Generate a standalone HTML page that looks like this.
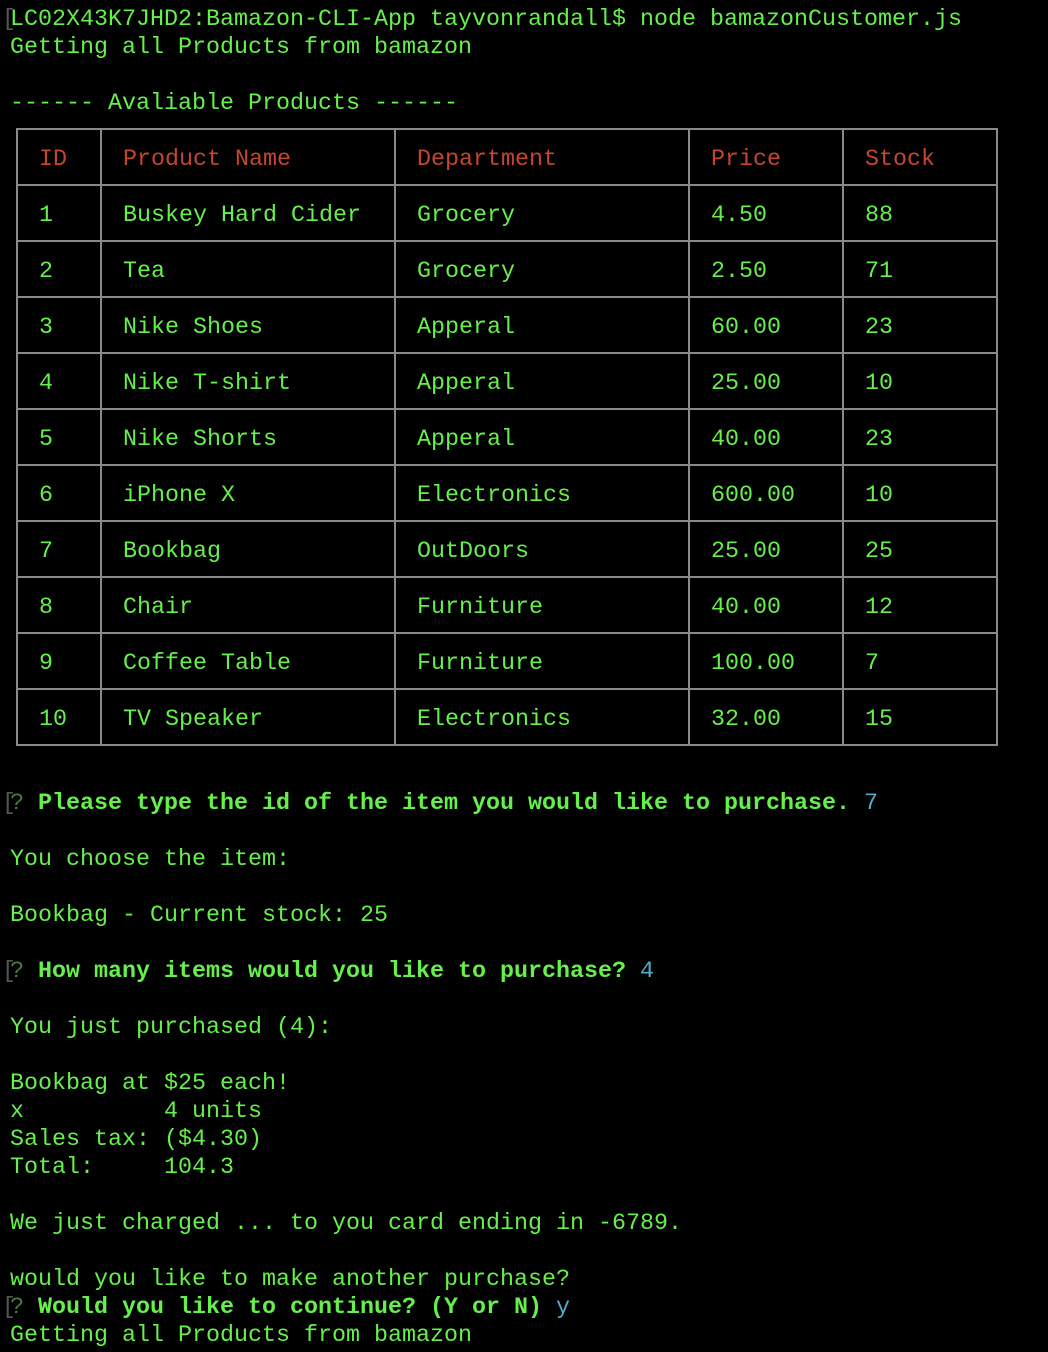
<!DOCTYPE html>
<html><head><meta charset="utf-8"><style>
html,body{margin:0;padding:0;background:#000;width:1048px;height:1352px;overflow:hidden;position:relative}
.l{position:absolute;left:10px;height:28px;line-height:28px;margin-top:2px;font-family:"Liberation Mono",monospace;font-size:23.33px;color:#66f04c;white-space:pre}
.b{font-weight:bold}
.q{color:#4a7a40;font-weight:normal}
.a{color:#55aacc;font-weight:normal}
.r{color:#c4462e}
.h{position:absolute;background:#8a8a8a;height:2px;left:16px;width:982px}
.v{position:absolute;background:#8a8a8a;width:2px;top:128px;height:618px}
.br{position:absolute;left:2px;height:28px;line-height:28px;margin-top:2px;font-family:"Liberation Mono",monospace;font-size:23.33px;color:#555}
</style></head><body>
<div class="br" style="top:4px">[</div>
<div class="l" style="top:4px">LC02X43K7JHD2:Bamazon-CLI-App tayvonrandall$ node bamazonCustomer.js</div>
<div class="l" style="top:32px">Getting all Products from bamazon</div>
<div class="l" style="top:88px">------ Avaliable Products ------</div>

<div class="h" style="top:128px"></div>
<div class="h" style="top:184px"></div>
<div class="h" style="top:240px"></div>
<div class="h" style="top:296px"></div>
<div class="h" style="top:352px"></div>
<div class="h" style="top:408px"></div>
<div class="h" style="top:464px"></div>
<div class="h" style="top:520px"></div>
<div class="h" style="top:576px"></div>
<div class="h" style="top:632px"></div>
<div class="h" style="top:688px"></div>
<div class="h" style="top:744px"></div>
<div class="v" style="left:16px"></div>
<div class="v" style="left:100px"></div>
<div class="v" style="left:394px"></div>
<div class="v" style="left:688px"></div>
<div class="v" style="left:842px"></div>
<div class="v" style="left:996px"></div>

<div class="l r" style="top:144px;left:39px">ID</div>
<div class="l r" style="top:144px;left:123px">Product Name</div>
<div class="l r" style="top:144px;left:417px">Department</div>
<div class="l r" style="top:144px;left:711px">Price</div>
<div class="l r" style="top:144px;left:865px">Stock</div>

<div class="l" style="top:200px;left:39px">1</div><div class="l" style="top:200px;left:123px">Buskey Hard Cider</div><div class="l" style="top:200px;left:417px">Grocery</div><div class="l" style="top:200px;left:711px">4.50</div><div class="l" style="top:200px;left:865px">88</div>
<div class="l" style="top:256px;left:39px">2</div><div class="l" style="top:256px;left:123px">Tea</div><div class="l" style="top:256px;left:417px">Grocery</div><div class="l" style="top:256px;left:711px">2.50</div><div class="l" style="top:256px;left:865px">71</div>
<div class="l" style="top:312px;left:39px">3</div><div class="l" style="top:312px;left:123px">Nike Shoes</div><div class="l" style="top:312px;left:417px">Apperal</div><div class="l" style="top:312px;left:711px">60.00</div><div class="l" style="top:312px;left:865px">23</div>
<div class="l" style="top:368px;left:39px">4</div><div class="l" style="top:368px;left:123px">Nike T-shirt</div><div class="l" style="top:368px;left:417px">Apperal</div><div class="l" style="top:368px;left:711px">25.00</div><div class="l" style="top:368px;left:865px">10</div>
<div class="l" style="top:424px;left:39px">5</div><div class="l" style="top:424px;left:123px">Nike Shorts</div><div class="l" style="top:424px;left:417px">Apperal</div><div class="l" style="top:424px;left:711px">40.00</div><div class="l" style="top:424px;left:865px">23</div>
<div class="l" style="top:480px;left:39px">6</div><div class="l" style="top:480px;left:123px">iPhone X</div><div class="l" style="top:480px;left:417px">Electronics</div><div class="l" style="top:480px;left:711px">600.00</div><div class="l" style="top:480px;left:865px">10</div>
<div class="l" style="top:536px;left:39px">7</div><div class="l" style="top:536px;left:123px">Bookbag</div><div class="l" style="top:536px;left:417px">OutDoors</div><div class="l" style="top:536px;left:711px">25.00</div><div class="l" style="top:536px;left:865px">25</div>
<div class="l" style="top:592px;left:39px">8</div><div class="l" style="top:592px;left:123px">Chair</div><div class="l" style="top:592px;left:417px">Furniture</div><div class="l" style="top:592px;left:711px">40.00</div><div class="l" style="top:592px;left:865px">12</div>
<div class="l" style="top:648px;left:39px">9</div><div class="l" style="top:648px;left:123px">Coffee Table</div><div class="l" style="top:648px;left:417px">Furniture</div><div class="l" style="top:648px;left:711px">100.00</div><div class="l" style="top:648px;left:865px">7</div>
<div class="l" style="top:704px;left:39px">10</div><div class="l" style="top:704px;left:123px">TV Speaker</div><div class="l" style="top:704px;left:417px">Electronics</div><div class="l" style="top:704px;left:711px">32.00</div><div class="l" style="top:704px;left:865px">15</div>

<div class="br" style="top:788px">[</div>
<div class="l b" style="top:788px"><span class="q">?</span> Please type the id of the item you would like to purchase. <span class="a">7</span></div>
<div class="l" style="top:844px">You choose the item:</div>
<div class="l" style="top:900px">Bookbag - Current stock: 25</div>
<div class="br" style="top:956px">[</div>
<div class="l b" style="top:956px"><span class="q">?</span> How many items would you like to purchase? <span class="a">4</span></div>
<div class="l" style="top:1012px">You just purchased (4):</div>
<div class="l" style="top:1068px">Bookbag at $25 each!</div>
<div class="l" style="top:1096px">x          4 units</div>
<div class="l" style="top:1124px">Sales tax: ($4.30)</div>
<div class="l" style="top:1152px">Total:     104.3</div>
<div class="l" style="top:1208px">We just charged ... to you card ending in -6789.</div>
<div class="l" style="top:1264px">would you like to make another purchase?</div>
<div class="br" style="top:1292px">[</div>
<div class="l b" style="top:1292px"><span class="q">?</span> Would you like to continue? (Y or N) <span class="a">y</span></div>
<div class="l" style="top:1320px">Getting all Products from bamazon</div>
</body></html>
